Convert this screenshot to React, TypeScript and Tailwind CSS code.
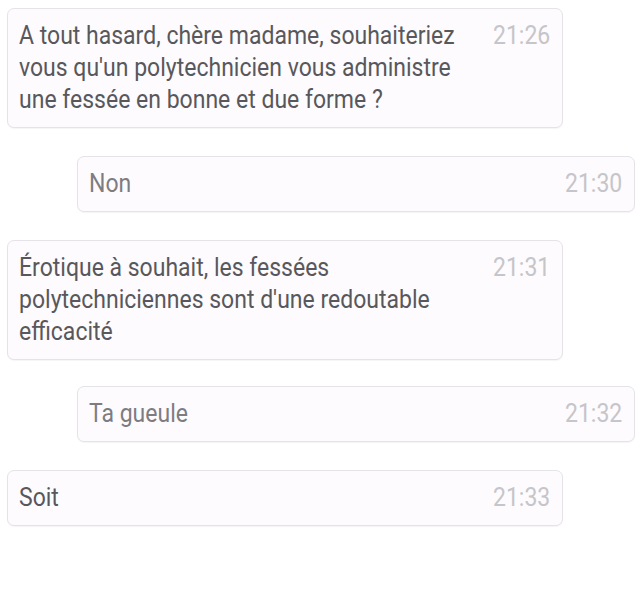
type Msg = { lines: string[]; time: string; mine?: boolean; gap: string };

const messages: Msg[] = [
    {
        lines: [
            'A tout hasard, chère madame, souhaiteriez',
            "vous qu'un polytechnicien vous administre",
            'une fessée en bonne et due forme ?',
        ],
        time: '21:26',
        gap: 'mt-0',
    },
    { lines: ['Non'], time: '21:30', mine: true, gap: 'mt-[28px]' },
    {
        lines: [
            'Érotique à souhait, les fessées',
            "polytechniciennes sont d'une redoutable",
            'efficacité',
        ],
        time: '21:31',
        gap: 'mt-[28px]',
    },
    { lines: ['Ta gueule'], time: '21:32', mine: true, gap: 'mt-[26px]' },
    { lines: ['Soit'], time: '21:33', gap: 'mt-[28px]' },
];

const Bubble = ({ msg }: { msg: Msg }) => (
    <div
        className={`${msg.gap} flex justify-between rounded-[7px] border border-[#e5e3e7] bg-[#fdfbfe] py-[11px] pl-[11px] pr-[12px] shadow-[0_1px_1px_rgba(0,0,0,0.04)] ${
            msg.mine ? 'ml-[77px] w-[558px] text-[#7d7d81]' : 'ml-[7px] w-[556px] text-[#58585c]'
        }`}
    >
        {/* the screenshot's font is a narrowed Roboto */}
        <p className="min-w-0 flex-1 origin-left scale-x-[0.92] whitespace-nowrap text-[25px] leading-[32px]">
            {msg.lines.map((l, i) => (
                <span key={i}>
                    {l}
                    {i < msg.lines.length - 1 && <br />}
                </span>
            ))}
        </p>
        <span className="shrink-0 origin-right scale-x-[0.92] text-[25px] leading-[32px] text-[#c6c5c9]">
            {msg.time}
        </span>
    </div>
);

export default function App() {
    return (
        <div
            className="h-[598px] w-[640px] bg-white pt-[8px]"
            style={{ fontFamily: 'Roboto, "Noto Sans", sans-serif' }}
        >
            <div className="flex flex-col">
                {messages.map((m, i) => (
                    <Bubble key={i} msg={m} />
                ))}
            </div>
        </div>
    );
}
